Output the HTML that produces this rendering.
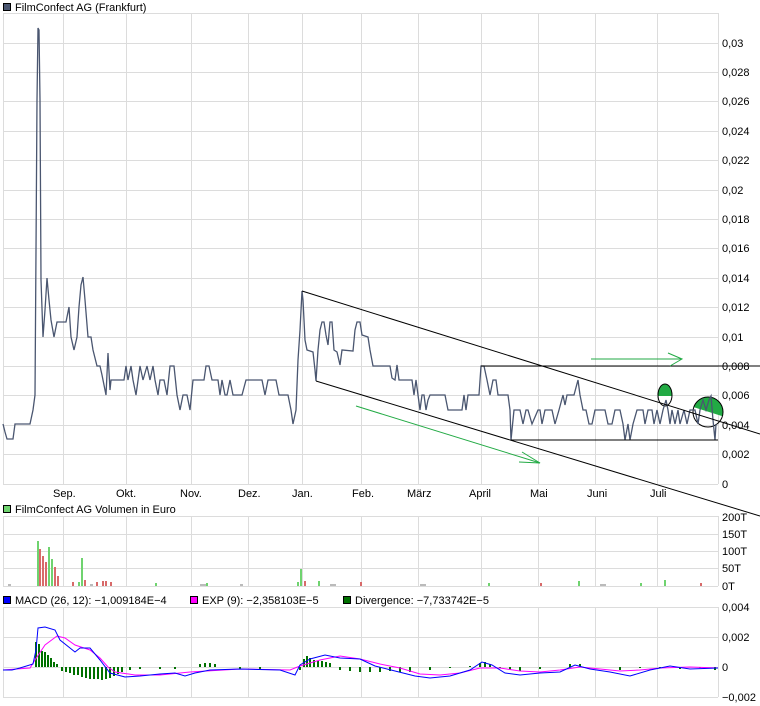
<!DOCTYPE html>
<html><head><meta charset="utf-8"><style>
body{margin:0;background:#fff;width:760px;height:706px;overflow:hidden}
svg{display:block;font-family:"Liberation Sans",sans-serif;font-size:11px}
</style></head><body>
<svg width="760" height="706" viewBox="0 0 760 706">
<defs>
<clipPath id="c1"><rect x="650" y="380" width="30" height="16"/></clipPath>
<clipPath id="c2"><polygon points="690,395 725,395 725,417 690,406"/></clipPath>
</defs>
<g stroke="#dcdcdc" stroke-width="1" fill="none">
<path d="M3 13.5H718M3 43.5H718M3 72.5H718M3 101.5H718M3 131.5H718M3 160.5H718M3 190.5H718M3 219.5H718M3 248.5H718M3 278.5H718M3 307.5H718M3 337.5H718M3 366.5H718M3 395.5H718M3 425.5H718M3 454.5H718M3 484.5H718"/>
<path d="M3.5 13V484M63.5 13V484M126.5 13V484M191.5 13V484M248.5 13V484M302.5 13V484M361.5 13V484M418.5 13V484M481.5 13V484M538.5 13V484M595.5 13V484M657.5 13V484M718.5 13V484"/>
<path d="M3 516.5H718M3 534.5H718M3 551.5H718M3 568.5H718M3 586.5H718"/>
<path d="M3.5 516V586M63.5 516V586M126.5 516V586M191.5 516V586M248.5 516V586M302.5 516V586M361.5 516V586M418.5 516V586M481.5 516V586M538.5 516V586M595.5 516V586M657.5 516V586M718.5 516V586"/>
<path d="M3 607.5H718M3 637.5H718M3 667.5H718M3 697.5H718"/>
<path d="M3.5 607V697M63.5 607V697M126.5 607V697M191.5 607V697M248.5 607V697M302.5 607V697M361.5 607V697M418.5 607V697M481.5 607V697M538.5 607V697M595.5 607V697M657.5 607V697M718.5 607V697"/>
</g>
<rect x="3.5" y="3.5" width="7" height="7" fill="#4a5670" stroke="#000"/>
<text x="15" y="11">FilmConfect AG (Frankfurt)</text>
<rect x="3.5" y="505.5" width="7" height="7" fill="#6fd36f" stroke="#000"/>
<text x="15" y="513">FilmConfect AG Volumen in Euro</text>
<rect x="3.5" y="596.5" width="7" height="7" fill="#0000ff" stroke="#000"/>
<text x="15" y="604">MACD (26, 12): −1,009184E−4</text>
<rect x="190.5" y="596.5" width="7" height="7" fill="#ff00ff" stroke="#000"/>
<text x="202" y="604">EXP (9): −2,358103E−5</text>
<rect x="343.5" y="596.5" width="7" height="7" fill="#007000" stroke="#000"/>
<text x="355" y="604">Divergence: −7,733742E−5</text>
<g font-size="11">
<text x="722" y="47">0,03</text><text x="722" y="76">0,028</text><text x="722" y="105">0,026</text><text x="722" y="135">0,024</text><text x="722" y="164">0,022</text><text x="722" y="194">0,02</text><text x="722" y="223">0,018</text><text x="722" y="252">0,016</text><text x="722" y="282">0,014</text><text x="722" y="311">0,012</text><text x="722" y="341">0,01</text><text x="722" y="370">0,008</text><text x="722" y="399">0,006</text><text x="722" y="429">0,004</text><text x="722" y="458">0,002</text><text x="722" y="488">0</text>
<text x="722" y="521">200T</text><text x="722" y="538">150T</text><text x="722" y="555">100T</text><text x="722" y="572">50T</text><text x="722" y="590">0T</text>
<text x="722" y="611">0,004</text><text x="722" y="641">0,002</text><text x="722" y="671">0</text><text x="722" y="701">−0,002</text>
<text x="53" y="497">Sep.</text><text x="116" y="497">Okt.</text><text x="180" y="497">Nov.</text><text x="238" y="497">Dez.</text><text x="292" y="497">Jan.</text><text x="352" y="497">Feb.</text><text x="407" y="497">März</text><text x="469" y="497">April</text><text x="530" y="497">Mai</text><text x="587" y="497">Juni</text><text x="650" y="497">Juli</text>
</g>
<ellipse cx="665" cy="395" rx="7" ry="11" fill="#22aa44" clip-path="url(#c1)"/>
<ellipse cx="665" cy="395" rx="7" ry="11" fill="none" stroke="#000"/>
<circle cx="708" cy="412" r="15" fill="#22aa44" clip-path="url(#c2)"/>
<circle cx="708" cy="412" r="15" fill="none" stroke="#000"/>
<polyline fill="none" stroke="#4a5670" stroke-width="1.3" points="3,424 5,432 7,439 13,439 15,424 30,424 33,410 35,395 36,250 37,100 38,28 39,30 40,100 41,280 43,337 45,310 47,278 49,300 51,320 54,337 57,322 61,322 66,322 69,307 71,337 74,350 77,337 79,307 81,285 83,277 85,300 88,337 91,337 93,350 97,366 100,366 102,375 106,395 108,353 110,390 111,380 124,380 126,366 128,380 131,366 133,380 136,395 140,366 143,380 147,366 150,380 153,366 155,380 158,395 160,380 164,380 167,395 170,366 174,366 177,395 180,410 183,395 187,395 190,410 193,380 204,380 206,366 209,366 212,380 218,380 220,395 222,380 225,395 227,395 230,380 233,395 242,395 246,380 262,380 265,395 268,380 276,380 279,395 288,395 291,410 293,424 296,410 298,360 300,330 302,291 303,300 305,340 307,350 313,352 315,370 316,381 318,350 320,330 322,322 324,322 326,335 328,345 330,322 332,322 334,350 337,352 340,365 342,350 353,351 355,330 357,322 360,322 362,335 368,337 370,350 373,366 390,366 392,378 395,380 397,365 399,380 412,380 414,395 416,380 418,395 420,410 422,395 424,395 426,410 428,400 430,395 445,395 448,410 462,410 464,395 466,410 468,395 479,395 481,366 484,366 487,380 490,395 493,380 496,380 498,395 508,395 510,410 511,440 514,410 520,410 523,424 526,410 528,410 532,424 538,410 540,410 542,424 545,410 552,410 555,424 559,410 563,395 565,405 567,395 574,395 578,380 580,395 583,410 586,410 589,424 592,424 595,410 600,410 605,410 608,424 612,424 615,410 620,410 623,424 625,440 628,424 630,440 633,424 637,410 643,410 645,424 648,410 652,410 654,424 657,410 660,424 663,410 666,400 668,410 670,424 672,410 675,424 678,410 680,424 684,410 687,424 690,410 695,410 698,424 700,410 703,400 706,410 709,400 711,396 713,420 715,440 716,424"/>
<g stroke="#000" stroke-width="1" fill="none">
<line x1="302" y1="291" x2="760" y2="434"/>
<line x1="316" y1="381" x2="760" y2="516"/>
<line x1="481" y1="366" x2="760" y2="366"/>
<line x1="511" y1="440" x2="718" y2="440"/>
</g>
<g stroke="#22aa44" stroke-width="1" fill="none">
<line x1="356" y1="406" x2="540" y2="463"/><path d="M522 452L540 463L519 462"/>
<line x1="591" y1="359" x2="682" y2="359"/><path d="M668 353L682 359L670 366"/>
</g>
<g fill="#6fd36f">
<rect x="37" y="541" width="2" height="45"/><rect x="48" y="547" width="2" height="39"/><rect x="51" y="559" width="2" height="27"/><rect x="81" y="558" width="2" height="28"/><rect x="300" y="569" width="2" height="17"/><rect x="318" y="581" width="2" height="5"/><rect x="297" y="582" width="2" height="4"/><rect x="78" y="582" width="2" height="4"/><rect x="664" y="580" width="2" height="6"/><rect x="578" y="581" width="2" height="5"/><rect x="155" y="583" width="2" height="3"/><rect x="206" y="583" width="2" height="3"/><rect x="488" y="583" width="2" height="3"/><rect x="640" y="583" width="2" height="3"/>
</g>
<g fill="#d86a6a">
<rect x="39" y="549" width="2" height="37"/><rect x="42" y="556" width="2" height="30"/><rect x="45" y="562" width="2" height="24"/><rect x="54" y="567" width="2" height="19"/><rect x="57" y="576" width="2" height="10"/><rect x="72" y="582" width="2" height="4"/><rect x="84" y="580" width="2" height="6"/><rect x="96" y="582" width="2" height="4"/><rect x="102" y="581" width="2" height="5"/><rect x="105" y="581" width="2" height="5"/><rect x="110" y="582" width="2" height="4"/><rect x="304" y="581" width="2" height="5"/><rect x="360" y="582" width="2" height="4"/><rect x="540" y="583" width="2" height="3"/><rect x="700" y="583" width="2" height="3"/>
</g>
<g fill="#bbb"><rect x="8" y="584" width="3" height="2"/><rect x="90" y="584" width="3" height="2"/><rect x="200" y="584" width="6" height="2"/><rect x="240" y="584" width="3" height="2"/><rect x="330" y="584" width="6" height="2"/><rect x="420" y="584" width="6" height="2"/><rect x="600" y="584" width="6" height="2"/></g>
<path stroke="#007000" stroke-width="2" fill="none" d="M36 667V642M39 667V644M42 667V651M45 667V652M48 667V655M51 667V658M54 667V662M57 667V664M62 667V671M66 667V672M70 667V673M74 667V675M78 667V675M82 667V677M86 667V678M90 667V679M94 667V679M98 667V679M102 667V680M106 667V679M110 667V678M114 667V676M118 667V674M122 667V672M130 667V670M140 667V669M160 667V669M175 667V669M200 667V664M205 667V663M210 667V663M215 667V664M240 667V669M260 667V669M300 667V670M304 667V659M307 667V656M310 667V658M314 667V660M318 667V661M322 667V661M326 667V662M330 667V663M340 667V670M350 667V671M360 667V672M370 667V672M380 667V672M390 667V671M400 667V672M410 667V672M430 667V670M450 667V668M470 667V666M480 667V663M485 667V662M490 667V664M500 667V668M510 667V670M520 667V671M540 667V669M560 667V667M570 667V664M580 667V664M600 667V667M620 667V670M640 667V668M660 667V668M680 667V669M700 667V668M715 667V670"/>
<polyline fill="none" stroke="#ff00ff" points="3,670 30,668 35,660 45,645 57,636 65,638 75,645 90,650 100,658 108,667 115,672 135,675 160,675 190,672 240,669 290,670 300,666 320,660 340,656 360,659 380,664 400,668 420,674 440,675 460,673 480,668 500,668 520,671 540,672 560,670 580,667 600,669 620,671 640,670 660,668 690,667 718,668"/>
<polyline fill="none" stroke="#0000ff" points="3,670 12,670 20,668 33,664 36,650 38,628 45,627 55,630 60,640 70,648 75,652 80,648 90,648 100,660 110,673 125,677 140,676 160,674 175,673 185,676 195,673 210,670 240,669 280,670 295,675 300,665 310,659 325,655 340,658 360,659 375,666 395,671 415,676 430,678 450,676 470,670 482,662 492,665 505,673 520,675 540,673 560,672 575,665 590,669 610,672 630,676 650,670 670,666 690,669 718,668"/>
</svg>
</body></html>
